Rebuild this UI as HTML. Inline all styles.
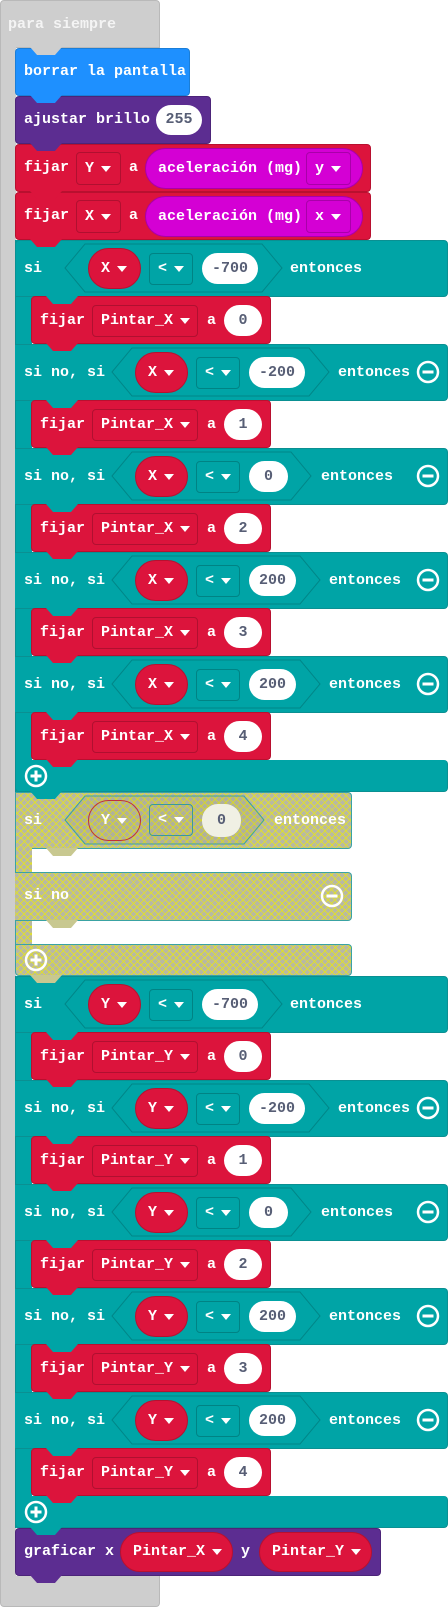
<!DOCTYPE html>
<html><head><meta charset="utf-8"><style>
*{box-sizing:border-box}
body{margin:0;width:448px;height:1608px;background:#fff;position:relative;overflow:hidden;font:bold 15px/20px "Liberation Mono",monospace;color:#fff}
.a{position:absolute}
.tx{position:absolute;white-space:pre;color:#fff;line-height:20px}
.teal{background:#00a4a6;border:1px solid #0a9092}
.red{background:#dc143c;border:1px solid #b8102f}
.dd{position:absolute;border:1px solid rgba(0,0,0,.2);border-radius:4px;display:flex;align-items:center;padding-left:8px;white-space:pre}
.ov{position:absolute;border-radius:21px;display:flex;align-items:center;white-space:pre}
.rov{background:#dc143c;border:1px solid #b8102f;padding-left:12px}
.wv{position:absolute;background:#fff;color:#575e75;border-radius:16px;display:flex;align-items:center;justify-content:center}
.tr{display:inline-block;width:0;height:0;border-left:5px solid transparent;border-right:5px solid transparent;border-top:6px solid #fff;margin-left:7px}
.tab{position:absolute;width:32px;height:8px;clip-path:polygon(0 0,100% 0,78% 100%,22% 100%)}
.hat{background-color:#b8b8a4;background-image:repeating-linear-gradient(45deg,rgba(225,225,40,.85) 0 1px,transparent 1px 5px),repeating-linear-gradient(-45deg,rgba(225,225,40,.85) 0 1px,transparent 1px 5px);border:1px solid #3aa3a3}
</style></head><body>

<div class="a" style="left:0;top:0;width:160px;height:48px;background:#cecece;border:1px solid #b9b9b9;border-radius:4px 4px 0 0"></div>
<div class="a" style="left:0;top:40px;width:16px;height:1540px;background:#cecece;border-left:1px solid #b9b9b9"></div>
<div class="a" style="left:0;top:1576px;width:160px;height:31px;background:#cecece;border:1px solid #b9b9b9;border-top:none;border-radius:0 0 4px 4px"></div>
<div class="tx" style="left:8px;top:15px;color:#f4f4f4">para siempre</div>

<div class="a" style="left:15px;top:48px;width:175px;height:48px;background:#1e90ff;border:1px solid #1a7ed8;border-radius:4px"></div>
<div class="tx" style="left:24px;top:62px">borrar la pantalla</div>
<div class="tab" style="left:30px;top:47px;background:#cecece"></div>
<div class="a" style="left:15px;top:96px;width:196px;height:48px;background:#5c2d91;border:1px solid #4c2479;border-radius:4px"></div>
<div class="tx" style="left:24px;top:110px">ajustar brillo</div>
<div class="wv" style="left:156px;top:105px;width:46px;height:30px">255</div>
<div class="tab" style="left:30px;top:95px;background:#1e90ff"></div>
<div class="a red" style="left:15px;top:144px;width:356px;height:48px;border-radius:4px"></div>
<div class="tx" style="left:24px;top:158px">fijar</div>
<div class="dd" style="left:76px;top:152px;width:45px;height:33px">Y<span class="tr"></span></div>
<div class="tx" style="left:129px;top:158px">a</div>
<div class="ov" style="left:145px;top:148px;width:218px;height:41px;background:#d400d4;border:1px solid #a800a8;padding-left:12px">aceleración (mg)</div>
<div class="dd" style="left:306px;top:152px;width:45px;height:33px">y<span class="tr"></span></div>
<div class="tab" style="left:30px;top:143px;background:#5c2d91"></div>
<div class="a red" style="left:15px;top:192px;width:356px;height:48px;border-radius:4px"></div>
<div class="tx" style="left:24px;top:206px">fijar</div>
<div class="dd" style="left:76px;top:200px;width:45px;height:33px">X<span class="tr"></span></div>
<div class="tx" style="left:129px;top:206px">a</div>
<div class="ov" style="left:145px;top:196px;width:218px;height:41px;background:#d400d4;border:1px solid #a800a8;padding-left:12px">aceleración (mg)</div>
<div class="dd" style="left:306px;top:200px;width:45px;height:33px">x<span class="tr"></span></div>
<div class="tab" style="left:30px;top:191px;background:#dc143c"></div>

<div class="a" style="left:15px;top:240px;width:17px;height:552px;background:#00a4a6;border-left:1px solid #0a9092"></div>
<div class="a teal" style="left:15px;top:240px;width:433px;height:57px;border-radius:4px 4px 4px 0"></div>
<div class="a teal" style="left:15px;top:344px;width:433px;height:57px;border-left:none;border-radius:0 4px 4px 0"></div>
<div class="a teal" style="left:15px;top:448px;width:433px;height:57px;border-left:none;border-radius:0 4px 4px 0"></div>
<div class="a teal" style="left:15px;top:552px;width:433px;height:57px;border-left:none;border-radius:0 4px 4px 0"></div>
<div class="a teal" style="left:15px;top:656px;width:433px;height:57px;border-left:none;border-radius:0 4px 4px 0"></div>
<div class="a teal" style="left:15px;top:760px;width:433px;height:32px;border-top:none;border-radius:0 4px 4px 4px"></div>

<div class="tx" style="left:24px;top:259px">si</div>
<svg class="a" style="left:64px;top:243px" width="220" height="51"><polygon points="1,25 21,1 198,1 218,25 198,49 21,49" fill="none" stroke="rgba(0,0,0,.18)"/></svg>
<div class="ov rov" style="left:88px;top:248px;width:53px;height:41px">X<span class="tr"></span></div>
<div class="dd" style="left:149px;top:253px;width:44px;height:32px">&lt;<span class="tr"></span></div>
<div class="wv" style="left:202px;top:253px;width:56px;height:31px">-700</div>
<div class="tx" style="left:290px;top:259px">entonces</div>
<div class="tx" style="left:24px;top:363px">si no, si</div>
<svg class="a" style="left:111px;top:347px" width="220" height="51"><polygon points="1,25 21,1 198,1 218,25 198,49 21,49" fill="none" stroke="rgba(0,0,0,.18)"/></svg>
<div class="ov rov" style="left:135px;top:352px;width:53px;height:41px">X<span class="tr"></span></div>
<div class="dd" style="left:196px;top:357px;width:44px;height:32px">&lt;<span class="tr"></span></div>
<div class="wv" style="left:249px;top:357px;width:56px;height:31px">-200</div>
<div class="tx" style="left:338px;top:363px">entonces</div>
<svg class="a" style="left:416px;top:360px" width="24" height="24"><circle cx="12" cy="12" r="10" fill="none" stroke="#fff" stroke-width="2.5"/><line x1="6.5" y1="12" x2="17.5" y2="12" stroke="#fff" stroke-width="3"/></svg>
<div class="tx" style="left:24px;top:467px">si no, si</div>
<svg class="a" style="left:111px;top:451px" width="202" height="51"><polygon points="1,25 21,1 180,1 200,25 180,49 21,49" fill="none" stroke="rgba(0,0,0,.18)"/></svg>
<div class="ov rov" style="left:135px;top:456px;width:53px;height:41px">X<span class="tr"></span></div>
<div class="dd" style="left:196px;top:461px;width:44px;height:32px">&lt;<span class="tr"></span></div>
<div class="wv" style="left:249px;top:461px;width:39px;height:31px">0</div>
<div class="tx" style="left:321px;top:467px">entonces</div>
<svg class="a" style="left:416px;top:464px" width="24" height="24"><circle cx="12" cy="12" r="10" fill="none" stroke="#fff" stroke-width="2.5"/><line x1="6.5" y1="12" x2="17.5" y2="12" stroke="#fff" stroke-width="3"/></svg>
<div class="tx" style="left:24px;top:571px">si no, si</div>
<svg class="a" style="left:111px;top:555px" width="211" height="51"><polygon points="1,25 21,1 189,1 209,25 189,49 21,49" fill="none" stroke="rgba(0,0,0,.18)"/></svg>
<div class="ov rov" style="left:135px;top:560px;width:53px;height:41px">X<span class="tr"></span></div>
<div class="dd" style="left:196px;top:565px;width:44px;height:32px">&lt;<span class="tr"></span></div>
<div class="wv" style="left:249px;top:565px;width:47px;height:31px">200</div>
<div class="tx" style="left:329px;top:571px">entonces</div>
<svg class="a" style="left:416px;top:568px" width="24" height="24"><circle cx="12" cy="12" r="10" fill="none" stroke="#fff" stroke-width="2.5"/><line x1="6.5" y1="12" x2="17.5" y2="12" stroke="#fff" stroke-width="3"/></svg>
<div class="tx" style="left:24px;top:675px">si no, si</div>
<svg class="a" style="left:111px;top:659px" width="211" height="51"><polygon points="1,25 21,1 189,1 209,25 189,49 21,49" fill="none" stroke="rgba(0,0,0,.18)"/></svg>
<div class="ov rov" style="left:135px;top:664px;width:53px;height:41px">X<span class="tr"></span></div>
<div class="dd" style="left:196px;top:669px;width:44px;height:32px">&lt;<span class="tr"></span></div>
<div class="wv" style="left:249px;top:669px;width:47px;height:31px">200</div>
<div class="tx" style="left:329px;top:675px">entonces</div>
<svg class="a" style="left:416px;top:672px" width="24" height="24"><circle cx="12" cy="12" r="10" fill="none" stroke="#fff" stroke-width="2.5"/><line x1="6.5" y1="12" x2="17.5" y2="12" stroke="#fff" stroke-width="3"/></svg>

<div class="a red" style="left:31px;top:296px;width:240px;height:48px;border-radius:4px"></div>
<div class="tx" style="left:40px;top:311px">fijar</div>
<div class="dd" style="left:92px;top:305px;width:106px;height:32px">Pintar_X<span class="tr"></span></div>
<div class="tx" style="left:207px;top:311px">a</div>
<div class="wv" style="left:224px;top:305px;width:38px;height:31px">0</div>
<div class="a red" style="left:31px;top:400px;width:240px;height:48px;border-radius:4px"></div>
<div class="tx" style="left:40px;top:415px">fijar</div>
<div class="dd" style="left:92px;top:409px;width:106px;height:32px">Pintar_X<span class="tr"></span></div>
<div class="tx" style="left:207px;top:415px">a</div>
<div class="wv" style="left:224px;top:409px;width:38px;height:31px">1</div>
<div class="a red" style="left:31px;top:504px;width:240px;height:48px;border-radius:4px"></div>
<div class="tx" style="left:40px;top:519px">fijar</div>
<div class="dd" style="left:92px;top:513px;width:106px;height:32px">Pintar_X<span class="tr"></span></div>
<div class="tx" style="left:207px;top:519px">a</div>
<div class="wv" style="left:224px;top:513px;width:38px;height:31px">2</div>
<div class="a red" style="left:31px;top:608px;width:240px;height:48px;border-radius:4px"></div>
<div class="tx" style="left:40px;top:623px">fijar</div>
<div class="dd" style="left:92px;top:617px;width:106px;height:32px">Pintar_X<span class="tr"></span></div>
<div class="tx" style="left:207px;top:623px">a</div>
<div class="wv" style="left:224px;top:617px;width:38px;height:31px">3</div>
<div class="a red" style="left:31px;top:712px;width:240px;height:48px;border-radius:4px"></div>
<div class="tx" style="left:40px;top:727px">fijar</div>
<div class="dd" style="left:92px;top:721px;width:106px;height:32px">Pintar_X<span class="tr"></span></div>
<div class="tx" style="left:207px;top:727px">a</div>
<div class="wv" style="left:224px;top:721px;width:38px;height:31px">4</div>

<div class="tab" style="left:30px;top:239px;background:#dc143c"></div>
<div class="tab" style="left:46px;top:296px;background:#00a4a6"></div>
<div class="tab" style="left:46px;top:400px;background:#00a4a6"></div>
<div class="tab" style="left:46px;top:504px;background:#00a4a6"></div>
<div class="tab" style="left:46px;top:608px;background:#00a4a6"></div>
<div class="tab" style="left:46px;top:712px;background:#00a4a6"></div>
<div class="tab" style="left:46px;top:343px;background:#dc143c"></div>
<div class="tab" style="left:46px;top:447px;background:#dc143c"></div>
<div class="tab" style="left:46px;top:551px;background:#dc143c"></div>
<div class="tab" style="left:46px;top:655px;background:#dc143c"></div>
<div class="tab" style="left:46px;top:759px;background:#dc143c"></div>
<svg class="a" style="left:24px;top:764px" width="24" height="24"><circle cx="12" cy="12" r="10" fill="none" stroke="#fff" stroke-width="2.5"/><path d="M6.5 12H17.5M12 6.5V17.5" stroke="#fff" stroke-width="3"/></svg>

<div class="a hat" style="left:15px;top:792px;width:337px;height:57px;border-radius:0 4px 4px 0"></div>
<div class="a hat" style="left:15px;top:848px;width:17px;height:100px;border-top:none;border-bottom:none;border-right:none"></div>
<div class="a hat" style="left:15px;top:872px;width:337px;height:49px;border-left:none;border-radius:0 4px 4px 0"></div>
<div class="a hat" style="left:15px;top:944px;width:337px;height:32px;border-radius:0 4px 4px 4px"></div>
<div class="tx" style="left:24px;top:811px">si</div>
<svg class="a" style="left:64px;top:795px" width="202" height="51"><polygon points="1,25 21,1 180,1 200,25 180,49 21,49" fill="rgba(0,0,0,.04)" stroke="#3aa3a3"/></svg>
<div class="ov" style="left:88px;top:800px;width:53px;height:41px;border:1px solid #c0303a;padding-left:12px">Y<span class="tr"></span></div>
<div class="dd" style="left:149px;top:804px;width:44px;height:32px;border-color:#3a9a9a">&lt;<span class="tr"></span></div>
<div class="wv" style="left:202px;top:804px;width:39px;height:33px;background:#f0f0e4">0</div>
<div class="tx" style="left:274px;top:811px">entonces</div>
<div class="tx" style="left:24px;top:886px">si no</div>
<svg class="a" style="left:320px;top:884px" width="24" height="24"><circle cx="12" cy="12" r="10" fill="none" stroke="#fff" stroke-width="2.5"/><line x1="6.5" y1="12" x2="17.5" y2="12" stroke="#fff" stroke-width="3"/></svg>
<svg class="a" style="left:24px;top:948px" width="24" height="24"><circle cx="12" cy="12" r="10" fill="none" stroke="#fff" stroke-width="2.5"/><path d="M6.5 12H17.5M12 6.5V17.5" stroke="#fff" stroke-width="3"/></svg>
<div class="tab" style="left:30px;top:791px;background:#00a4a6"></div>
<div class="tab" style="left:46px;top:848px;background:#c8c890"></div>
<div class="tab" style="left:46px;top:920px;background:#c8c890"></div>

<div class="a" style="left:15px;top:976px;width:17px;height:552px;background:#00a4a6;border-left:1px solid #0a9092"></div>
<div class="a teal" style="left:15px;top:976px;width:433px;height:57px;border-radius:4px 4px 4px 0"></div>
<div class="a teal" style="left:15px;top:1080px;width:433px;height:57px;border-left:none;border-radius:0 4px 4px 0"></div>
<div class="a teal" style="left:15px;top:1184px;width:433px;height:57px;border-left:none;border-radius:0 4px 4px 0"></div>
<div class="a teal" style="left:15px;top:1288px;width:433px;height:57px;border-left:none;border-radius:0 4px 4px 0"></div>
<div class="a teal" style="left:15px;top:1392px;width:433px;height:57px;border-left:none;border-radius:0 4px 4px 0"></div>
<div class="a teal" style="left:15px;top:1496px;width:433px;height:32px;border-top:none;border-radius:0 4px 4px 4px"></div>

<div class="tx" style="left:24px;top:995px">si</div>
<svg class="a" style="left:64px;top:979px" width="220" height="51"><polygon points="1,25 21,1 198,1 218,25 198,49 21,49" fill="none" stroke="rgba(0,0,0,.18)"/></svg>
<div class="ov rov" style="left:88px;top:984px;width:53px;height:41px">Y<span class="tr"></span></div>
<div class="dd" style="left:149px;top:989px;width:44px;height:32px">&lt;<span class="tr"></span></div>
<div class="wv" style="left:202px;top:989px;width:56px;height:31px">-700</div>
<div class="tx" style="left:290px;top:995px">entonces</div>
<div class="tx" style="left:24px;top:1099px">si no, si</div>
<svg class="a" style="left:111px;top:1083px" width="220" height="51"><polygon points="1,25 21,1 198,1 218,25 198,49 21,49" fill="none" stroke="rgba(0,0,0,.18)"/></svg>
<div class="ov rov" style="left:135px;top:1088px;width:53px;height:41px">Y<span class="tr"></span></div>
<div class="dd" style="left:196px;top:1093px;width:44px;height:32px">&lt;<span class="tr"></span></div>
<div class="wv" style="left:249px;top:1093px;width:56px;height:31px">-200</div>
<div class="tx" style="left:338px;top:1099px">entonces</div>
<svg class="a" style="left:416px;top:1096px" width="24" height="24"><circle cx="12" cy="12" r="10" fill="none" stroke="#fff" stroke-width="2.5"/><line x1="6.5" y1="12" x2="17.5" y2="12" stroke="#fff" stroke-width="3"/></svg>
<div class="tx" style="left:24px;top:1203px">si no, si</div>
<svg class="a" style="left:111px;top:1187px" width="202" height="51"><polygon points="1,25 21,1 180,1 200,25 180,49 21,49" fill="none" stroke="rgba(0,0,0,.18)"/></svg>
<div class="ov rov" style="left:135px;top:1192px;width:53px;height:41px">Y<span class="tr"></span></div>
<div class="dd" style="left:196px;top:1197px;width:44px;height:32px">&lt;<span class="tr"></span></div>
<div class="wv" style="left:249px;top:1197px;width:39px;height:31px">0</div>
<div class="tx" style="left:321px;top:1203px">entonces</div>
<svg class="a" style="left:416px;top:1200px" width="24" height="24"><circle cx="12" cy="12" r="10" fill="none" stroke="#fff" stroke-width="2.5"/><line x1="6.5" y1="12" x2="17.5" y2="12" stroke="#fff" stroke-width="3"/></svg>
<div class="tx" style="left:24px;top:1307px">si no, si</div>
<svg class="a" style="left:111px;top:1291px" width="211" height="51"><polygon points="1,25 21,1 189,1 209,25 189,49 21,49" fill="none" stroke="rgba(0,0,0,.18)"/></svg>
<div class="ov rov" style="left:135px;top:1296px;width:53px;height:41px">Y<span class="tr"></span></div>
<div class="dd" style="left:196px;top:1301px;width:44px;height:32px">&lt;<span class="tr"></span></div>
<div class="wv" style="left:249px;top:1301px;width:47px;height:31px">200</div>
<div class="tx" style="left:329px;top:1307px">entonces</div>
<svg class="a" style="left:416px;top:1304px" width="24" height="24"><circle cx="12" cy="12" r="10" fill="none" stroke="#fff" stroke-width="2.5"/><line x1="6.5" y1="12" x2="17.5" y2="12" stroke="#fff" stroke-width="3"/></svg>
<div class="tx" style="left:24px;top:1411px">si no, si</div>
<svg class="a" style="left:111px;top:1395px" width="211" height="51"><polygon points="1,25 21,1 189,1 209,25 189,49 21,49" fill="none" stroke="rgba(0,0,0,.18)"/></svg>
<div class="ov rov" style="left:135px;top:1400px;width:53px;height:41px">Y<span class="tr"></span></div>
<div class="dd" style="left:196px;top:1405px;width:44px;height:32px">&lt;<span class="tr"></span></div>
<div class="wv" style="left:249px;top:1405px;width:47px;height:31px">200</div>
<div class="tx" style="left:329px;top:1411px">entonces</div>
<svg class="a" style="left:416px;top:1408px" width="24" height="24"><circle cx="12" cy="12" r="10" fill="none" stroke="#fff" stroke-width="2.5"/><line x1="6.5" y1="12" x2="17.5" y2="12" stroke="#fff" stroke-width="3"/></svg>

<div class="a red" style="left:31px;top:1032px;width:240px;height:48px;border-radius:4px"></div>
<div class="tx" style="left:40px;top:1047px">fijar</div>
<div class="dd" style="left:92px;top:1041px;width:106px;height:32px">Pintar_Y<span class="tr"></span></div>
<div class="tx" style="left:207px;top:1047px">a</div>
<div class="wv" style="left:224px;top:1041px;width:38px;height:31px">0</div>
<div class="a red" style="left:31px;top:1136px;width:240px;height:48px;border-radius:4px"></div>
<div class="tx" style="left:40px;top:1151px">fijar</div>
<div class="dd" style="left:92px;top:1145px;width:106px;height:32px">Pintar_Y<span class="tr"></span></div>
<div class="tx" style="left:207px;top:1151px">a</div>
<div class="wv" style="left:224px;top:1145px;width:38px;height:31px">1</div>
<div class="a red" style="left:31px;top:1240px;width:240px;height:48px;border-radius:4px"></div>
<div class="tx" style="left:40px;top:1255px">fijar</div>
<div class="dd" style="left:92px;top:1249px;width:106px;height:32px">Pintar_Y<span class="tr"></span></div>
<div class="tx" style="left:207px;top:1255px">a</div>
<div class="wv" style="left:224px;top:1249px;width:38px;height:31px">2</div>
<div class="a red" style="left:31px;top:1344px;width:240px;height:48px;border-radius:4px"></div>
<div class="tx" style="left:40px;top:1359px">fijar</div>
<div class="dd" style="left:92px;top:1353px;width:106px;height:32px">Pintar_Y<span class="tr"></span></div>
<div class="tx" style="left:207px;top:1359px">a</div>
<div class="wv" style="left:224px;top:1353px;width:38px;height:31px">3</div>
<div class="a red" style="left:31px;top:1448px;width:240px;height:48px;border-radius:4px"></div>
<div class="tx" style="left:40px;top:1463px">fijar</div>
<div class="dd" style="left:92px;top:1457px;width:106px;height:32px">Pintar_Y<span class="tr"></span></div>
<div class="tx" style="left:207px;top:1463px">a</div>
<div class="wv" style="left:224px;top:1457px;width:38px;height:31px">4</div>

<div class="tab" style="left:30px;top:975px;background:#c8c890"></div>
<div class="tab" style="left:46px;top:1032px;background:#00a4a6"></div>
<div class="tab" style="left:46px;top:1136px;background:#00a4a6"></div>
<div class="tab" style="left:46px;top:1240px;background:#00a4a6"></div>
<div class="tab" style="left:46px;top:1344px;background:#00a4a6"></div>
<div class="tab" style="left:46px;top:1448px;background:#00a4a6"></div>
<div class="tab" style="left:46px;top:1079px;background:#dc143c"></div>
<div class="tab" style="left:46px;top:1183px;background:#dc143c"></div>
<div class="tab" style="left:46px;top:1287px;background:#dc143c"></div>
<div class="tab" style="left:46px;top:1391px;background:#dc143c"></div>
<div class="tab" style="left:46px;top:1495px;background:#dc143c"></div>
<svg class="a" style="left:24px;top:1500px" width="24" height="24"><circle cx="12" cy="12" r="10" fill="none" stroke="#fff" stroke-width="2.5"/><path d="M6.5 12H17.5M12 6.5V17.5" stroke="#fff" stroke-width="3"/></svg>

<div class="a" style="left:15px;top:1528px;width:366px;height:48px;background:#5c2d91;border:1px solid #4c2479;border-radius:4px"></div>
<div class="tx" style="left:24px;top:1542px">graficar x</div>
<div class="ov rov" style="left:120px;top:1532px;width:113px;height:40px">Pintar_X<span class="tr"></span></div>
<div class="tx" style="left:241px;top:1542px">y</div>
<div class="ov rov" style="left:259px;top:1532px;width:113px;height:40px">Pintar_Y<span class="tr"></span></div>
<div class="tab" style="left:30px;top:1527px;background:#00a4a6"></div>
<div class="tab" style="left:30px;top:1575px;background:#5c2d91"></div>

</body></html>
